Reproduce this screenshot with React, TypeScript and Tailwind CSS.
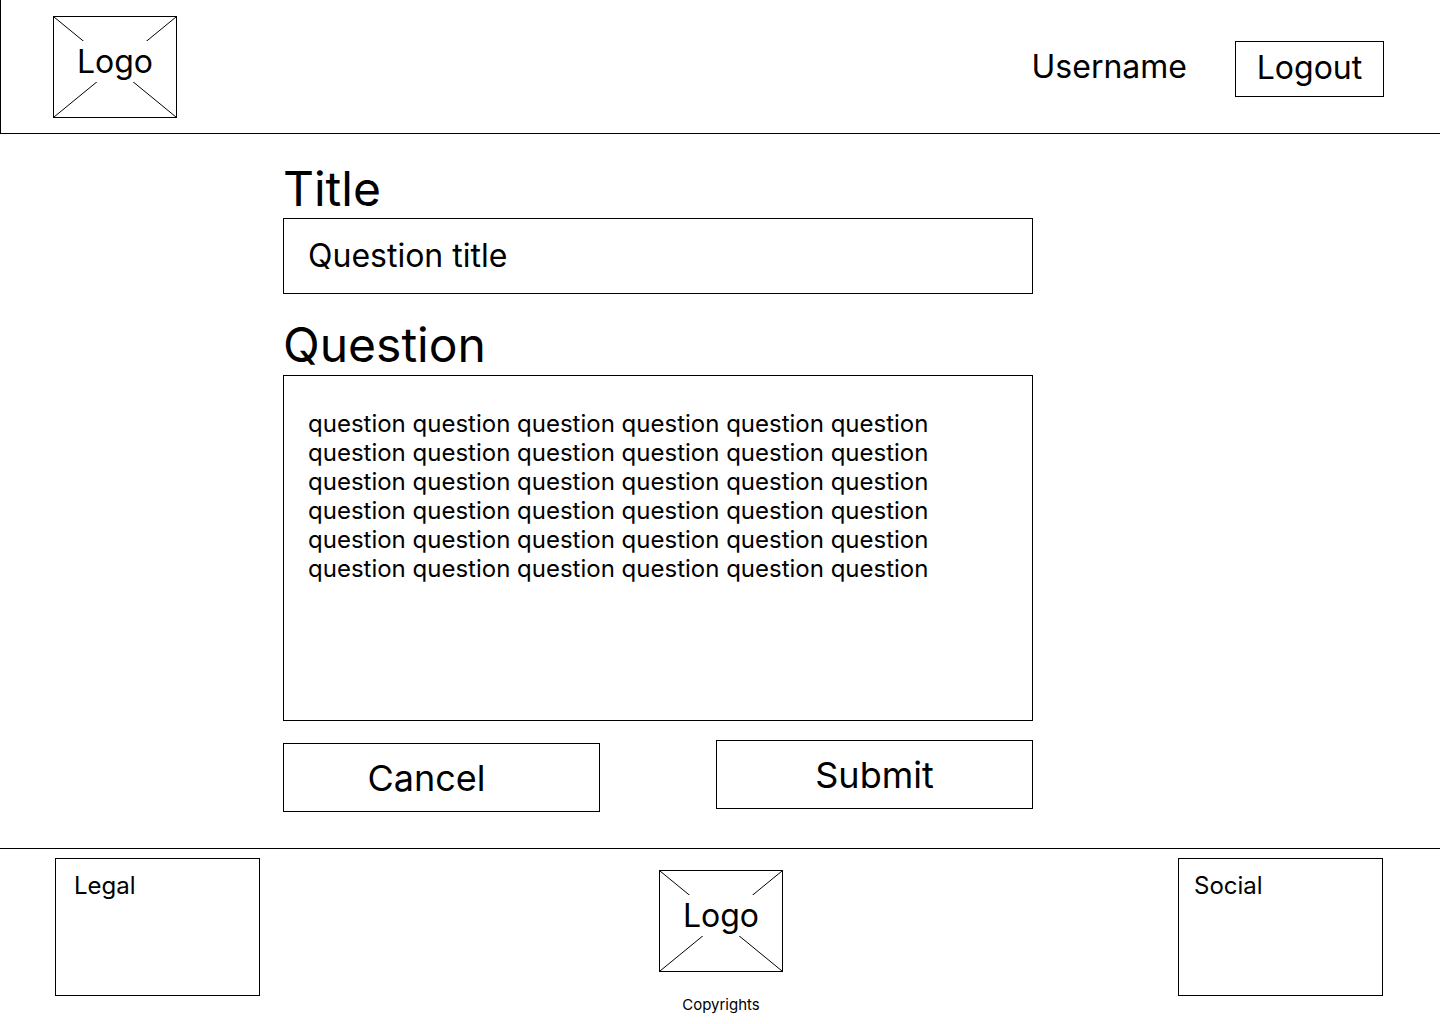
function Logo() {
  return (
    <div className="relative grid h-[102px] w-[124px] place-items-center border border-black">
      <svg className="absolute inset-0 h-full w-full" viewBox="0 0 122 100" fill="none" stroke="black" aria-hidden="true">
        <path d="M0 0L122 100M122 0L0 100" />
      </svg>
      <span className="relative mb-3 bg-white px-1 text-[32px] leading-[41px]">Logo</span>
    </div>
  );
}

export default function App() {
  const body = Array(6).fill(Array(6).fill("question").join(" ")).join("\n");
  return (
    <div className="flex min-h-screen flex-col bg-white font-['Inter',sans-serif] text-black">
      <header className="flex items-start justify-between border-b border-l border-black pt-4 pr-14 pb-[15px] pl-[52px]">
        <Logo />
        <div className="flex items-center gap-12 pt-[25px]">
          <span className="pb-1 text-[32px] leading-10">Username</span>
          <button type="button" className="h-14 w-[149px] border border-black pb-0.5 text-[32px] leading-10">Logout</button>
        </div>
      </header>
      <main className="grow px-[283px] pt-7">
        <form className="flex w-[750px] max-w-full flex-col" onSubmit={(e) => e.preventDefault()}>
          <label htmlFor="title" className="mb-0.5 text-5xl leading-[54px]">Title</label>
          <input id="title" defaultValue="Question title" className="h-[76px] border border-black px-6 pb-0.5 text-[32px] outline-none" />
          <label htmlFor="question" className="mt-6 mb-[3px] text-5xl leading-[54px]">Question</label>
          <textarea id="question" defaultValue={body} className="h-[346px] resize-none border border-black px-6 py-[33px] text-2xl leading-[29px] outline-none" />
          <div className="mt-[19px] flex justify-between">
            <button type="button" className="mt-[3px] h-[69px] w-[317px] border border-black pr-[30px] text-4xl">Cancel</button>
            <button type="submit" className="h-[69px] w-[317px] border border-black text-4xl">Submit</button>
          </div>
        </form>
      </main>
      <footer className="grid grid-cols-[1fr_auto_1fr] border-t border-black pt-[9px] pr-[57px] pb-2.5 pl-[55px]">
        <section className="h-[138px] w-[205px] border border-black px-[18px] py-3">
          <h2 className="text-2xl leading-[30px]">Legal</h2>
        </section>
        <div className="flex flex-col items-center pt-3 pl-1">
          <Logo />
          <p className="mt-6 text-[15px] leading-[18px]">Copyrights</p>
        </div>
        <section className="h-[138px] w-[205px] justify-self-end border border-black px-[15px] py-3">
          <h2 className="text-2xl leading-[30px]">Social</h2>
        </section>
      </footer>
    </div>
  );
}
